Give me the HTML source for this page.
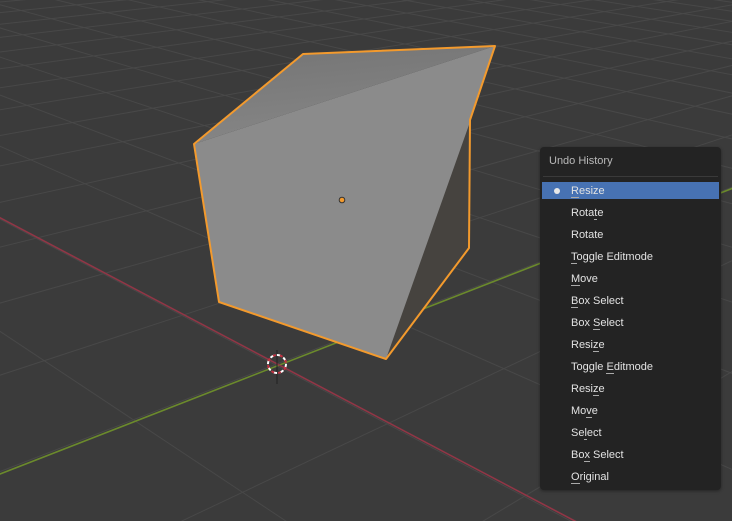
<!DOCTYPE html>
<html><head><meta charset="utf-8">
<style>
html,body{margin:0;padding:0;width:732px;height:521px;overflow:hidden;background:#3b3b3b;font-family:"Liberation Sans",sans-serif;position:relative;}
#v{position:absolute;left:0;top:0;overflow:hidden}
.menu{position:absolute;left:540px;top:147px;width:181px;height:343px;background:#232323;border-radius:4px;box-shadow:0 1px 3px rgba(0,0,0,.4);}
.hdr{position:absolute;left:9px;top:8px;font-size:11px;color:#b9b9b9;}
.sep{position:absolute;left:3px;right:3px;top:29px;height:1px;background:#3a3a3a;}
.it{position:absolute;left:2px;width:177px;height:17px;line-height:18px;font-size:11px;color:#e2e2e2;}
.it span.t{position:absolute;left:29px;}
.hl{background:#4772b3;}
.dot{position:absolute;left:12px;top:6px;width:6px;height:6px;border-radius:50%;background:#e8e8e8;}
u{text-decoration:none;border-bottom:1px solid #aaa;}
</style></head><body>
<svg id="v" width="732" height="521" viewBox="0 0 732 521">
<g id="grid" stroke="#484848" stroke-width="1"></g>
<line x1="-100" y1="513" x2="900" y2="123" stroke="#6b8a2c" stroke-width="1.6"/>
<line x1="-100" y1="165" x2="700" y2="587" stroke="#913646" stroke-width="1.6"/>
<line x1="277" y1="350" x2="277" y2="384" stroke="#222" stroke-width="1"/>
<circle cx="277" cy="364" r="9" fill="none" stroke="#fff" stroke-width="2" stroke-dasharray="4 3"/>
<circle cx="277" cy="364" r="9" fill="none" stroke="#c03040" stroke-width="2" stroke-dasharray="3 4" stroke-dashoffset="4"/>
<polygon points="194,144 495,46 470,120 469,248 386,359 219,302" fill="#8b8b8b"/>
<polygon points="470,122 469,248 386,359" fill="#46433f"/>
<defs><linearGradient id="tg" x1="0" y1="0" x2="0.3" y2="1"><stop offset="0" stop-color="#747474"/><stop offset="1" stop-color="#868686"/></linearGradient></defs>
<polygon points="194,144 303,54 495,46" fill="url(#tg)"/>
<polygon points="194,144 303,54 495,46 470,120 469,248 386,359 219,302" fill="none" stroke="#f39a2d" stroke-width="2" stroke-linejoin="round"/>
<circle cx="342" cy="200" r="2.8" fill="#f39a2d" stroke="#333" stroke-width="1"/>
</svg>
<script>
(function(){
var g=document.getElementById('grid'),s='';
function ln(vx,vy,px,py){var ex=px+(px-vx)*20,ey=py+(py-vy)*20;s+='<line x1="'+vx+'" y1="'+vy+'" x2="'+ex+'" y2="'+ey+'"/>';}
for(var t=-9;t<=22;t++){var d=t+10.32;if(d<=0.3)continue;var x=1600-13650/d;var y=474-0.39*x;ln(-834,-222,x,y);}
for(var k=-22;k<=6;k++){var d=10.92-k;if(d<=0.3)continue;var x=-834+12132/d;var y=218+0.527*x;ln(1600,-150,x,y);}
g.innerHTML=s;})();
</script>
<div class="menu">
<div class="hdr">Undo History</div>
<div class="sep"></div>
<div class="it hl" style="top:35px"><div class="dot"></div><span class="t"><u>R</u>esize</span></div>
<div class="it" style="top:57px"><span class="t">Rota<u>t</u>e</span></div>
<div class="it" style="top:79px"><span class="t">Rotate</span></div>
<div class="it" style="top:101px"><span class="t"><u>T</u>oggle Editmode</span></div>
<div class="it" style="top:123px"><span class="t"><u>M</u>ove</span></div>
<div class="it" style="top:145px"><span class="t"><u>B</u>ox Select</span></div>
<div class="it" style="top:167px"><span class="t">Box <u>S</u>elect</span></div>
<div class="it" style="top:189px"><span class="t">Resi<u>z</u>e</span></div>
<div class="it" style="top:211px"><span class="t">Toggle <u>E</u>ditmode</span></div>
<div class="it" style="top:233px"><span class="t">Resi<u>z</u>e</span></div>
<div class="it" style="top:255px"><span class="t">Mo<u>v</u>e</span></div>
<div class="it" style="top:277px"><span class="t">Se<u>l</u>ect</span></div>
<div class="it" style="top:299px"><span class="t">Bo<u>x</u> Select</span></div>
<div class="it" style="top:321px"><span class="t"><u>O</u>riginal</span></div>
</div>
</body></html>
